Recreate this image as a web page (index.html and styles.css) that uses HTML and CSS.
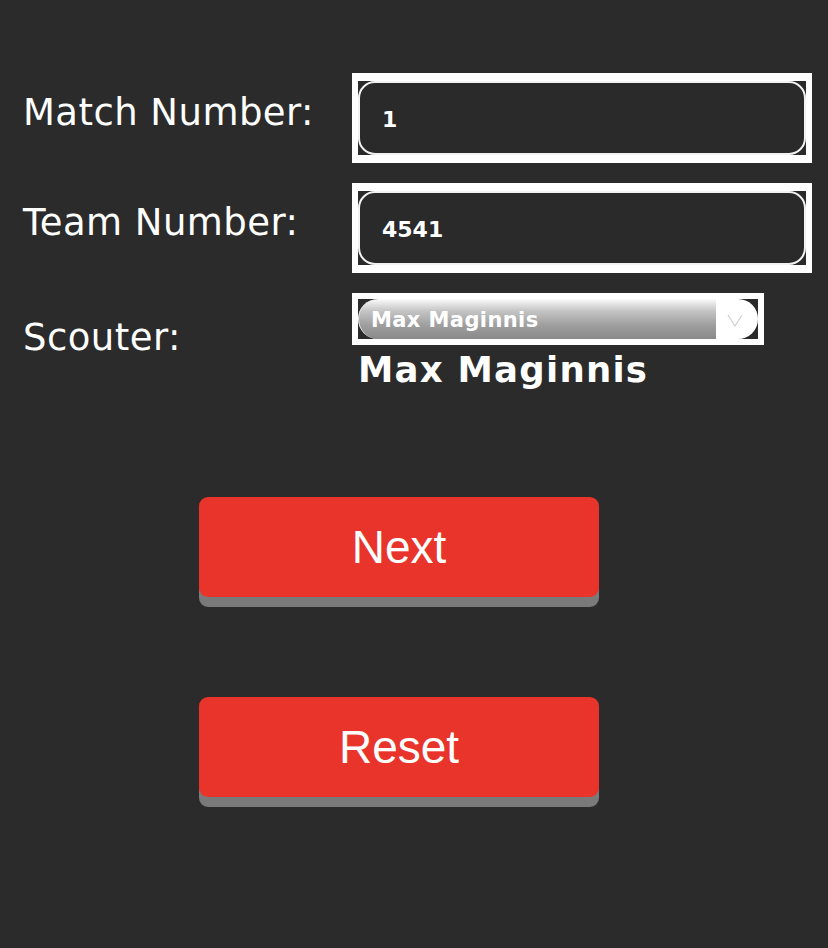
FILE: index.html
```html
<!DOCTYPE html>
<html>
<head>
<meta charset="utf-8">
<link rel="stylesheet" href="styles.css">
</head>
<body>
<div class="page">
  <div class="form">
    <div class="label">Match Number:</div>
    <div class="frame">
      <div class="input">1</div>
    </div>

    <div class="label">Team Number:</div>
    <div class="frame">
      <div class="input">4541</div>
    </div>

    <div class="label label-scouter">Scouter:</div>
    <div class="scouter">
      <div class="select-frame">
        <div class="select">
          <div class="select-value">Max Maginnis</div>
          <div class="select-arrow">
            <svg width="16" height="13" viewBox="0 0 16 13"><path d="M1 1 L8 12 L15 1" fill="none" stroke="#cfcfcf" stroke-width="1.2"/></svg>
          </div>
        </div>
      </div>
      <div class="scouter-name">Max Maginnis</div>
    </div>
  </div>

  <div class="buttons">
    <button class="btn">Next</button>
    <button class="btn">Reset</button>
  </div>
</div>
</body>
</html>
```

FILE: styles.css
```css
html, body {
  margin: 0;
  padding: 0;
  background: #2b2b2b;
}

.page {
  width: 828px;
  height: 948px;
  background: #2b2b2b;
  color: #ffffff;
  font-family: "DejaVu Sans", Verdana, sans-serif;
  overflow: hidden;
}

.form {
  display: grid;
  grid-template-columns: 329px 460px;
  row-gap: 20px;
  padding: 73px 0 0 23px;
}

.label {
  font-size: 37px;
  letter-spacing: 0.45px;
  line-height: 43px;
  padding-top: 18px;
  white-space: nowrap;
}

.label-scouter {
  padding-top: 23px;
}

.frame {
  box-sizing: border-box;
  width: 460px;
  height: 90px;
  border-style: solid;
  border-color: #ffffff;
  border-width: 8px 6px;
  background: #2a2a2a;
}

.input {
  box-sizing: border-box;
  height: 74px;
  border: 2px solid #f2f2f2;
  border-radius: 17px;
  padding-left: 22px;
  display: flex;
  align-items: center;
  font-weight: bold;
  font-size: 22px;
  padding-top: 2px;
}

.scouter {
  display: flex;
  flex-direction: column;
}

.select-frame {
  box-sizing: border-box;
  width: 412px;
  height: 52px;
  border: 6px solid #ffffff;
  background: #2a2a2a;
}

.select {
  display: flex;
  height: 40px;
}

.select-value {
  box-sizing: border-box;
  width: 358px;
  height: 40px;
  border-radius: 20px 0 0 20px;
  border-left: 1.5px solid #f4f4f4;
  background: linear-gradient(to bottom, #fbfbfb 0%, #c4c4c4 30%, #9f9f9f 65%, #8a8a8a 100%);
  padding-left: 12px;
  padding-top: 1px;
  font-weight: bold;
  font-size: 21px;
  letter-spacing: 0.4px;
  line-height: 40px;
  color: #ffffff;
  white-space: nowrap;
}

.select-arrow {
  width: 42px;
  height: 40px;
  background: #ffffff;
  border-radius: 0 20px 20px 0;
  display: flex;
  align-items: center;
  padding-left: 11px;
  box-sizing: border-box;
}

.select-arrow svg {
  display: block;
  margin-top: 2px;
}

.scouter-name {
  margin-top: 5px;
  padding-left: 6px;
  font-weight: bold;
  font-size: 35.5px;
  letter-spacing: 1.25px;
  line-height: 40px;
  white-space: nowrap;
}

.buttons {
  display: flex;
  flex-direction: column;
  gap: 100px;
  padding-left: 199px;
  margin-top: 107px;
}

.btn {
  display: block;
  width: 400px;
  height: 100px;
  border: none;
  border-radius: 9px;
  background: #e8342a;
  box-shadow: 0 10px 0 #7a7a7a;
  color: #ffffff;
  font-family: "Liberation Sans", Arial, sans-serif;
  font-size: 46px;
  padding: 0;
  margin: 0;
}
```
